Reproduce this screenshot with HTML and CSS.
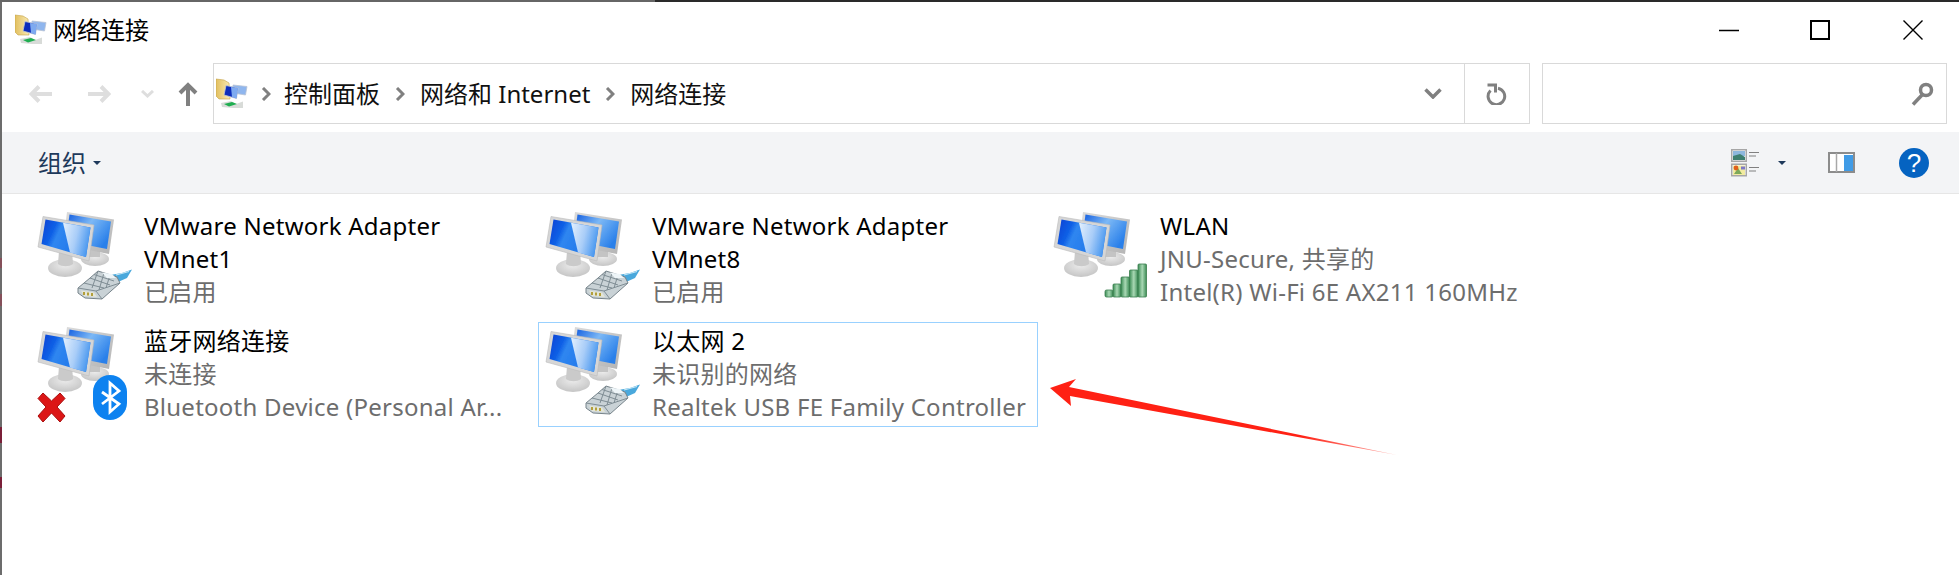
FILE: index.html
```html
<!DOCTYPE html>
<html lang="zh-CN">
<head>
<meta charset="utf-8">
<title>网络连接</title>
<link rel="stylesheet" href="styles.css">
</head>
<body>
<svg class="defs" width="0" height="0" aria-hidden="true">
  <defs>
    <linearGradient id="scr" x1="0" y1="0" x2="1" y2="0.35">
      <stop offset="0" stop-color="#0840d4"/><stop offset=".3" stop-color="#0f60e6"/><stop offset=".42" stop-color="#2f86f0"/><stop offset="1" stop-color="#1f74ea"/>
    </linearGradient>
    <linearGradient id="glare" x1="0" y1="0" x2="1" y2="0.3">
      <stop offset="0" stop-color="#e4f0fd"/><stop offset=".55" stop-color="#a9cdf8"/><stop offset="1" stop-color="#4f9bf0"/>
    </linearGradient>
    <linearGradient id="scr2" x1="0" y1="0" x2="1" y2="0.6">
      <stop offset="0" stop-color="#0f5ae0"/><stop offset=".5" stop-color="#7cb8f5"/><stop offset="1" stop-color="#2a80ea"/>
    </linearGradient>
    <linearGradient id="frame" x1="0" y1="0" x2="1" y2="1">
      <stop offset="0" stop-color="#dcdcdc"/><stop offset="1" stop-color="#b4b4b4"/>
    </linearGradient>
    <radialGradient id="base" cx=".5" cy=".35" r=".7">
      <stop offset="0" stop-color="#ececec"/><stop offset="1" stop-color="#c2c2c2"/>
    </radialGradient>
    <linearGradient id="folder" x1="0" y1="0" x2="1" y2="0">
      <stop offset="0" stop-color="#e2bf5e"/><stop offset="1" stop-color="#f9eab4"/>
    </linearGradient>
    <linearGradient id="bar" x1="0" y1="0" x2="1" y2="0">
      <stop offset="0" stop-color="#3b8c55"/><stop offset=".5" stop-color="#a9d8b4"/><stop offset="1" stop-color="#3b8c55"/>
    </linearGradient>
    <filter id="soft" x="-5%" y="-5%" width="110%" height="110%"><feGaussianBlur stdDeviation=".4"/></filter>

    <symbol id="monitors" viewBox="0 0 100 100">
      <g filter="url(#soft)">
        <ellipse cx="61" cy="52" rx="14" ry="7" fill="url(#base)"/>
        <path d="M54 40h12v10H54z" fill="#c4c4c4"/>
        <path d="M33 5 80 12.500 75 47 29 38z" fill="url(#frame)"/>
        <path d="M35.500 7.500 77 14.500 73 42 32 34z" fill="url(#scr2)"/>
        <ellipse cx="31" cy="61" rx="17" ry="9" fill="url(#base)"/>
        <path d="M25 44h13l1 13c-4 3-11 3-15 0z" fill="#cacaca"/>
        <path d="M9 9.500 60 18 55 54 4 40z" fill="#d6d6d6" stroke="#bbb" stroke-width=".6"/>
        <path d="M11.500 12.500 56.500 20.500 52 50 7.500 37z" fill="url(#scr)"/>
        <path d="M29 15.700 56.500 20.500 52 50 36 45.500z" fill="url(#glare)"/>
      </g>
    </symbol>

    <symbol id="plug" viewBox="0 0 100 100">
      <g filter="url(#soft)">
        <path d="M76 68 88 66 98 62.500 93 71 84 75 78 74z" fill="#4aa8dc"/>
        <path d="M82 68 95 64.500" stroke="#c5e6f5" stroke-width="1.200" fill="none"/>
        <path d="M44 81 56 71 64 64 83 70 86 76 68 92 51 91 44 86z" fill="#c9d2d6" stroke="#76838a" stroke-width="1"/>
        <path d="M44 81 62 84 68 92M62 84 86 76M56 71 76 78M60 67.500 80 74M50 76 70 81M64 64 58 81M70 66 65 83M76 68 72 81" stroke="#7f8d94" stroke-width="1" fill="none"/>
        <path d="M47 83.500 60 85.500 63 90 50 89z" fill="#e4e6d8"/>
        <path d="M49 85h2v3h-2zM53 85.500h2v3h-2zM57 86h2v3h-2z" fill="#b39f3a"/>
        <path d="M68 65.500 78 67 82 71 73 71z" fill="#eef5f8"/>
      </g>
    </symbol>

    <symbol id="small" viewBox="0 0 32 32">
      <path d="M0 1 8 2 13 5 14 21 3 21 0 18z" fill="url(#folder)" stroke="#c4a246" stroke-width=".6"/>
      <path d="M17 7 31 8.500 29.500 17 17 15z" fill="#8fb6ee" stroke="#b9c3d4" stroke-width=".8"/>
      <path d="M10 7.500 22 10 20.500 20.500 8 17z" fill="#0d2dbb" stroke="#c2c9d6" stroke-width=".8"/>
      <path d="M15 9 22 10 20.500 20.500 16 19z" fill="#7eaaf0"/>
      <path d="M5 25 15 23 20 26 27 23.500 27 30 17 30 6 29z" fill="#d8dbd8"/>
      <path d="M8 26 16 24 21 26 13 28.500z" fill="#1fae50"/>
    </symbol>

    <symbol id="views" viewBox="0 0 28 28">
      <rect x=".75" y=".75" width="14.500" height="11.500" fill="#fff" stroke="#a6a6a6" stroke-width="1.500"/>
      <path d="M2 2h12v5H2z" fill="#8db7dd"/><path d="M2 7 9 5 14 8v3H2z" fill="#3e7f70"/>
      <rect x=".75" y="15.250" width="14.500" height="11.500" fill="#fff" stroke="#a6a6a6" stroke-width="1.500"/>
      <path d="M2 16.500h12V26H2z" fill="#f2eba0"/><path d="M3 25 7 19 11 25z" fill="#7da85a"/><circle cx="5" cy="19" r="2.400" fill="#e0601c"/><path d="M10 17.500h4v3h-4z" fill="#7d78c8"/>
      <path d="M18 3.500h10M18 7h7M18 18.500h10M18 22h7" stroke="#808080" stroke-width="1.200" fill="none"/>
    </symbol>
  </defs>
</svg>

<div class="desk">
  <div class="topstrip"></div>

  <header class="titlebar">
    <svg class="ico-small"><use href="#small"/></svg>
    <span class="title">网络连接</span>
    <div class="winctl">
      <span class="winbtn"><svg width="20" height="20"><path d="M0 10.500h20" stroke="#000" stroke-width="1.500"/></svg></span>
      <span class="winbtn max"><svg width="20" height="20"><rect x="1" y="1" width="18" height="18" fill="none" stroke="#000" stroke-width="2"/></svg></span>
      <span class="winbtn"><svg width="20" height="20"><path d="M.5.500 19.500 19.500M19.500.500.500 19.500" stroke="#000" stroke-width="1.400"/></svg></span>
    </div>
  </header>

  <nav class="navrow">
    <span class="nb nb-a"><svg width="24" height="18"><path d="M23 9H4M10 1.500 2.500 9 10 16.500" fill="none" stroke="#dedede" stroke-width="4"/></svg></span>
    <span class="nb nb-a"><svg width="24" height="18"><path d="M1 9h19M14 1.500 21.500 9 14 16.500" fill="none" stroke="#dedede" stroke-width="4"/></svg></span>
    <span class="nb nb-b"><svg width="13" height="8"><path d="M1 1 6.500 6 12 1" fill="none" stroke="#dedede" stroke-width="3"/></svg></span>
    <span class="nb nb-c"><svg width="20" height="24"><path d="M10 24V4M2 11 10 3l8 8" fill="none" stroke="#808080" stroke-width="4"/></svg></span>

    <div class="addr">
      <svg class="ico-small addr-ico"><use href="#small"/></svg>
      <svg class="sep first" width="10" height="14"><path d="M2 1 8 7 2 13" fill="none" stroke="#808080" stroke-width="3"/></svg>
      <span class="crumb">控制面板</span>
      <svg class="sep" width="10" height="14"><path d="M2 1 8 7 2 13" fill="none" stroke="#808080" stroke-width="3"/></svg>
      <span class="crumb">网络和 Internet</span>
      <svg class="sep" width="10" height="14"><path d="M2 1 8 7 2 13" fill="none" stroke="#808080" stroke-width="3"/></svg>
      <span class="crumb">网络连接</span>
      <svg class="addr-drop" width="18" height="11"><path d="M1.500 1.500 9 9l7.500-7.500" fill="none" stroke="#808080" stroke-width="3.500"/></svg>
      <span class="refresh"><svg width="22" height="22"><path d="M12 5.200a8.300 8.300 0 1 1-7.500 2.300" fill="none" stroke="#808080" stroke-width="3"/><path d="M1.500 2h8v7.500" fill="none" stroke="#808080" stroke-width="3"/></svg></span>
    </div>

    <div class="search">
      <svg width="23" height="24"><circle cx="15" cy="8" r="5.500" fill="none" stroke="#808080" stroke-width="3.500"/><path d="M11 13 2 22.500" stroke="#808080" stroke-width="3.500"/></svg>
    </div>
  </nav>

  <div class="toolbar">
    <span class="org">组织</span>
    <span class="caret org-caret"></span>
    <div class="tools">
      <svg class="t-views" width="28" height="28"><use href="#views"/></svg>
      <span class="caret t-caret"></span>
      <svg class="t-pane" width="27" height="21"><rect x="1" y="1" width="25" height="19" fill="#fff" stroke="#8c8c8c" stroke-width="2"/><path d="M8.500 1v19" stroke="#a8a8a8" stroke-width="1.500"/><rect x="16" y="3" width="9" height="16" fill="#409be6"/></svg>
      <span class="help">?</span>
    </div>
  </div>

  <main class="grid">
    <article class="item">
      <svg class="netico"><use href="#monitors"/><use href="#plug"/></svg>
      <div class="info">
        <div class="name">VMware Network Adapter VMnet1</div>
        <div class="sub">已启用</div>
      </div>
    </article>
    <article class="item">
      <svg class="netico"><use href="#monitors"/><use href="#plug"/></svg>
      <div class="info">
        <div class="name">VMware Network Adapter VMnet8</div>
        <div class="sub">已启用</div>
      </div>
    </article>
    <article class="item">
      <svg class="netico">
        <use href="#monitors"/>
        <g filter="url(#soft)" stroke="#3a7d4e" stroke-width=".8">
          <rect x="55" y="83" width="8" height="7" rx="1.500" fill="url(#bar)"/>
          <rect x="63" y="77" width="8" height="13" rx="1" fill="url(#bar)"/>
          <rect x="71" y="70" width="8.500" height="20" rx="1" fill="url(#bar)"/>
          <rect x="79.500" y="63" width="8.500" height="27" rx="1" fill="url(#bar)"/>
          <rect x="88" y="57" width="8.500" height="33" rx="1" fill="url(#bar)"/>
        </g>
      </svg>
      <div class="info">
        <div class="name">WLAN</div>
        <div class="sub">JNU-Secure, 共享的</div>
        <div class="sub">Intel(R) Wi-Fi 6E AX211 160MHz</div>
      </div>
    </article>
    <article class="item">
      <svg class="netico">
        <use href="#monitors"/>
        <g filter="url(#soft)">
          <path d="M9 71 17.500 79 26 71 31 76.500 23 85 31 94 26 100 17.500 91 9 100 4 94 12 85 4 76.500z" fill="#dc1818" stroke="#a80c0c" stroke-width="1"/>
          <rect x="59" y="53" width="34" height="45" rx="17" fill="#0a82f0"/>
          <path d="M68 70 85 82 76 90V61l9 8-17 13" fill="none" stroke="#fff" stroke-width="2.800"/>
        </g>
      </svg>
      <div class="info">
        <div class="name">蓝牙网络连接</div>
        <div class="sub">未连接</div>
        <div class="sub">Bluetooth Device (Personal Ar...</div>
      </div>
    </article>
    <article class="item selected">
      <svg class="netico"><use href="#monitors"/><use href="#plug"/></svg>
      <div class="info">
        <div class="name">以太网 2</div>
        <div class="sub">未识别的网络</div>
        <div class="sub">Realtek USB FE Family Controller</div>
      </div>
    </article>
  </main>

  <svg class="arrow" width="360" height="90" viewBox="1040 375 360 90"><defs><linearGradient id="fade" gradientUnits="userSpaceOnUse" x1="1300" y1="0" x2="1397" y2="0"><stop offset="0" stop-color="#ff2114"/><stop offset="1" stop-color="#ff2114" stop-opacity=".35"/></linearGradient></defs><path d="M1050 388 1076 379 1069 387 1397 455 1070 396 1071 406z" fill="url(#fade)"/></svg>
</div>
</body>
</html>
```
FILE: styles.css
```css
* { box-sizing: border-box; }
html, body { margin: 0; padding: 0; background: #fff; }
body { width: 1959px; height: 575px; overflow: hidden; font-family: "Noto Sans", "Noto Sans CJK SC", sans-serif; color: #000; }
.defs { position: absolute; }

.desk {
  position: relative;
  width: 1959px; height: 575px;
  padding-left: 2px;
  background: #fff linear-gradient(to bottom,
    #6c6c6c 0 258px, #85505a 258px 268px, #6c6c6c 268px 294px, #85505a 294px 306px, #6c6c6c 306px 427px,
    #7a1f38 427px 443px, #6c6c6c 443px 477px, #7a1f38 477px 488px, #6c6c6c 488px) no-repeat left top / 2px 100%;
}
.topstrip { height: 2px; margin-left: -2px; background: linear-gradient(to right, #666 0 655px, #2a2a2a 655px); }

.titlebar { height: 55px; display: flex; align-items: center; padding-left: 13px; background: #fff; }
.ico-small { width: 32px; height: 32px; flex: none; }
.title { margin-left: 6px; font-size: 24px; line-height: 32px; }
.winctl { margin-left: auto; display: flex; }
.winbtn { width: 92px; height: 32px; display: flex; align-items: center; justify-content: center; }
.winbtn.max { padding-right: 3px; }

.navrow { height: 75px; padding: 6px 12px 8px 10px; display: flex; align-items: center; background: #fff; }
.nb { height: 61px; display: flex; align-items: center; justify-content: center; flex: none; }
.nb-a { width: 58px; }
.nb-b { width: 38px; }
.nb-c { width: 44px; }
.addr { margin-left: 3px; width: 1317px; height: 61px; border: 1px solid #d9d9d9; display: flex; align-items: center; padding-left: 2px; flex: none; }
.sep { margin: 0 15px; flex: none; }
.sep.first { margin-left: 13px; margin-right: 13px; }
.crumb { font-size: 24px; line-height: 32px; color: #111; white-space: nowrap; }
.addr-drop { margin-left: auto; margin-right: 22px; flex: none; }
.refresh { width: 65px; height: 59px; border-left: 1px solid #d9d9d9; display: flex; align-items: center; justify-content: center; flex: none; }
.search { margin-left: 12px; width: 405px; height: 61px; border: 1px solid #d9d9d9; display: flex; align-items: center; justify-content: flex-end; padding-right: 12px; flex: none; }

.toolbar { height: 62px; background: #f3f4f6; border-bottom: 1px solid #e6e6e6; display: flex; align-items: center; padding: 0 30px 0 36px; }
.org { font-size: 24px; line-height: 32px; color: #1e395b; }
.caret { width: 0; height: 0; border: 4px solid transparent; border-top-color: #1e395b; border-bottom-width: 0; flex: none; }
.org-caret { margin-left: 7px; }
.tools { margin-left: auto; display: flex; align-items: center; }
.t-caret { margin-left: 19px; }
.t-pane { margin-left: 42px; }
.help { margin-left: 44px; width: 30px; height: 30px; border-radius: 50%; background: #0563c1; color: #fff; font: 400 26px/30px "Liberation Sans", sans-serif; text-align: center; }

.grid { padding: 13px 0 0 28px; display: grid; grid-template-columns: repeat(3, 500px); grid-auto-rows: 105px; column-gap: 8px; row-gap: 10px; }
.item { display: flex; border: 1px solid transparent; padding: 1px 0 2px 3px; }
.item.selected { border-color: #99d1ff; }
.netico { width: 100px; height: 100px; margin-top: -2px; flex: none; overflow: visible; }
.info { margin-left: 10px; width: 376px; font-size: 24px; line-height: 33px; letter-spacing: .25px; }
.name { color: #000; }
.sub { color: #6d6d6d; white-space: nowrap; }

.arrow { position: absolute; left: 1040px; top: 375px; }
```
